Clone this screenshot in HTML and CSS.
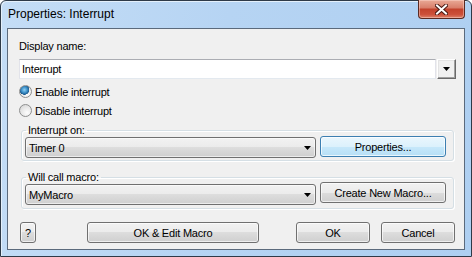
FILE: index.html
```html
<!DOCTYPE html>
<html lang="en">
<head>
    <meta charset="UTF-8">
    <title>Properties: Interrupt</title>
    <link rel="stylesheet" href="styles.css">
</head>
<body>
    <div class="window">
        <div class="titlebar">
            <span class="title">Properties: Interrupt</span>
            <span class="close">
                <svg width="13" height="11" viewBox="0 0 13 11">
                    <path d="M2 1.5L11 9.5M11 1.5L2 9.5" stroke="#4a1a14" stroke-width="4" stroke-linecap="square"/>
                    <path d="M2 1.5L11 9.5M11 1.5L2 9.5" stroke="#fff" stroke-width="2" stroke-linecap="square"/>
                </svg>
            </span>
        </div>
        <div class="client">
            <div class="label">Display name:</div>
            <div class="namerow">
                <input class="textbox" type="text" value="Interrupt">
                <span class="dropbtn">
                    <svg width="7" height="4" viewBox="0 0 7 4"><path d="M0 0h7L3.5 4z"/></svg>
                </span>
            </div>
            <label class="radio"><span class="dot checked"></span>Enable interrupt</label>
            <label class="radio second"><span class="dot"></span>Disable interrupt</label>

            <fieldset class="group first">
                <legend>Interrupt on:</legend>
                <div class="grouprow">
                    <div class="combo">Timer 0
                        <svg width="7" height="4" viewBox="0 0 7 4"><path d="M0 0h7L3.5 4z"/></svg>
                    </div>
                    <button class="btn side hot">Properties...</button>
                </div>
            </fieldset>

            <fieldset class="group second">
                <legend>Will call macro:</legend>
                <div class="grouprow">
                    <div class="combo">MyMacro
                        <svg width="7" height="4" viewBox="0 0 7 4"><path d="M0 0h7L3.5 4z"/></svg>
                    </div>
                    <button class="btn side raised">Create New Macro...</button>
                </div>
            </fieldset>

            <div class="buttons">
                <button class="btn help">?</button>
                <button class="btn edit">OK &amp; Edit Macro</button>
                <button class="btn ok">OK</button>
                <button class="btn cancel">Cancel</button>
            </div>
        </div>
    </div>
</body>
</html>
```

FILE: styles.css
```css
body {
    margin: 0;
    font-family: "Liberation Sans", Arial, sans-serif;
    font-size: 11px;
    letter-spacing: -0.2px;
    color: #000;
}

.window {
    box-sizing: border-box;
    width: 472px;
    height: 257px;
    border: 1px solid #2e3a48;
    border-radius: 6px 6px 0 0;
    background: linear-gradient(100deg, #c4ddf6 0%, #b6d4f3 45%, #aecff1 100%);
    box-shadow: inset 1px 1px 0 #e4f0fb;
}

.titlebar {
    display: flex;
    justify-content: space-between;
    align-items: flex-start;
    height: 27px;
}

.title {
    font-size: 12px;
    letter-spacing: 0;
    line-height: 16px;
    padding: 5px 0 0 7px;
}

.close {
    display: flex;
    align-items: center;
    justify-content: center;
    box-sizing: border-box;
    width: 47px;
    height: 19px;
    margin: -1px 6px 0 0;
    border: 1px solid #5a2a22;
    border-top: 0;
    border-radius: 0 0 4px 4px;
    background: linear-gradient(#e9a996 0%, #d9806c 42%, #c3432d 52%, #cc503a 80%, #dc826a 100%);
    box-shadow: inset 0 0 0 1px rgba(255, 220, 210, 0.45);
}

.client {
    box-sizing: border-box;
    height: 222px;
    margin: 0 6px;
    border: 1px solid #5b6a7c;
    background: #f0f0f0;
    padding-top: 11px;
}

.label {
    line-height: 13px;
    margin-left: 11px;
}

.namerow {
    display: flex;
    height: 20px;
    margin: 6px 0 0 11px;
}

.textbox {
    box-sizing: border-box;
    width: 417px;
    height: 20px;
    margin: 0;
    padding: 0 0 0 2px;
    border: 1px solid;
    border-color: #abadb3 #e2e3ea #e3e9ef #e2e3ea;
    font: inherit;
    letter-spacing: inherit;
    background: #fff;
    outline: none;
}

.dropbtn {
    display: flex;
    align-items: center;
    justify-content: center;
    box-sizing: border-box;
    width: 19px;
    height: 20px;
    margin-left: 1px;
    border: 1px solid;
    border-color: #fff #696969 #696969 #fff;
    box-shadow: inset -1px -1px 0 #a0a0a0, inset 1px 1px 0 #e3e3e3;
    background: #f0f0f0;
}

.radio {
    display: flex;
    align-items: center;
    height: 17px;
    margin: 4px 0 0 11px;
}

.radio.second {
    margin-top: 2px;
}

.dot {
    box-sizing: border-box;
    width: 13px;
    height: 13px;
    margin-right: 3px;
    border: 1px solid #8e8f8f;
    border-radius: 50%;
    background: radial-gradient(circle at 65% 70%, #fdfdfd 0%, #e6e6e6 55%, #cfcfcf 100%);
}

.dot.checked {
    background:
        radial-gradient(circle at 40% 35%, #8fd0f4 0%, #3b8fc8 30%, #1d5b8e 48%, transparent 52%),
        radial-gradient(circle at 65% 70%, #fdfdfd 0%, #e6e6e6 55%, #cfcfcf 100%);
}

.group {
    margin: 5px 10px 0 13px;
    padding: 0 6px 2px 3px;
    border: 1px solid #d5dfe5;
    border-radius: 3px;
    box-shadow: inset 1px 1px 0 #fff, 1px 1px 0 #fff;
    min-width: 0;
}

.group.second {
    margin-top: 10px;
    padding-bottom: 3px;
}

.group legend {
    line-height: 13px;
    padding: 0 2px;
    margin-left: 1px;
}

.grouprow {
    display: flex;
    align-items: flex-start;
}

.combo {
    display: flex;
    align-items: center;
    justify-content: space-between;
    box-sizing: border-box;
    width: 291px;
    height: 21px;
    padding: 0 4px 0 3px;
    border: 1px solid #707070;
    border-radius: 3px;
    background: linear-gradient(#f2f2f2 0%, #ebebeb 50%, #dddddd 50%, #cfcfcf 100%);
    box-shadow: inset 0 0 0 1px rgba(255, 255, 255, 0.6);
}

.btn {
    box-sizing: border-box;
    height: 21px;
    margin: 0;
    padding: 0;
    border: 1px solid #707070;
    border-radius: 3px;
    background: linear-gradient(#f2f2f2 0%, #ebebeb 50%, #dddddd 50%, #cfcfcf 100%);
    box-shadow: inset 0 0 0 1px rgba(255, 255, 255, 0.65);
    font: inherit;
    letter-spacing: inherit;
    color: #000;
}

.btn.side {
    width: 126px;
    margin: -1px 0 0 4px;
}

.btn.raised {
    margin-top: -2px;
}

.btn.hot {
    border-color: #3c7fb1;
    background: linear-gradient(#eaf6fd 0%, #dcf1fc 50%, #c7e8fa 50%, #b6dff6 100%);
    box-shadow: inset 0 0 0 1px rgba(255, 255, 255, 0.7);
}

.buttons {
    display: flex;
    margin-top: 13px;
}

.help {
    width: 16px;
    margin-left: 12px;
}

.edit {
    width: 172px;
    margin-left: 51px;
}

.ok {
    width: 74px;
    margin-left: 37px;
}

.cancel {
    width: 74px;
    margin-left: 11px;
}
```
